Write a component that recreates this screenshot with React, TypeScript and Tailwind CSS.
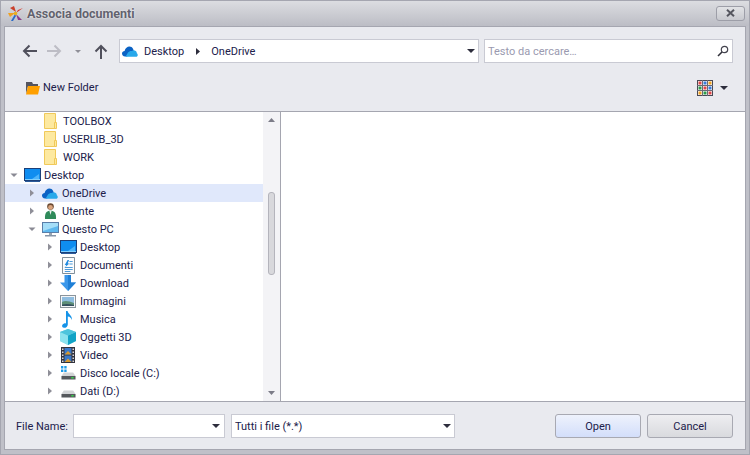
import React from "react";

const Arrow = ({ open }: { open?: boolean }) =>
  open ? (
    <svg width="8" height="8" viewBox="0 0 8 8" className="block"><path d="M0.5 2.5H7.5L4 6z" fill="#8a8a94" /></svg>
  ) : (
    <svg width="8" height="8" viewBox="0 0 8 8" className="block"><path d="M2 0.5V7.5L6 4z" fill="#8f8f98" /></svg>
  );

const Caret = () => (
  <svg width="8" height="4" viewBox="0 0 8 4" className="block"><path d="M0 0H8L4 4z" fill="#2d2d3c" /></svg>
);

const Folder = () => (
  <svg width="13" height="16" viewBox="0 0 13 16" className="block">
    <path d="M0.5 0.5H11.5V15.5H0.5z" fill="#fde9a0" stroke="#f0c95a" />
    <path d="M10.5 9.5H12.5V15.5H10.5z" fill="#fde9a0" stroke="#f0c95a" />
  </svg>
);

const Monitor = () => (
  <svg width="17" height="14" viewBox="0 0 17 14" className="block">
    <rect x="0.5" y="0.5" width="16" height="12" fill="#0f8df0" stroke="#1c3f78" />
    <path d="M1 11H16V12H1z" fill="#7fd0ff" />
    <path d="M8 11L15 6V11z" fill="#4db4fa" />
    <rect x="1" y="13" width="15" height="1" fill="#2a5a9a" />
  </svg>
);

const Cloud = () => (
  <svg width="16" height="11" viewBox="0 0 16 11" className="block">
    <path d="M3 10.5C1 10.5 0 9 0 7.6C0 6 1.3 5 2.6 5C3.2 2.2 5.4 0.5 7.4 0.5C9 0.5 10.3 1.3 11 2.8C11.5 4 11.8 5 11.8 5.4L5 10.5z" fill="#0b62c4" />
    <path d="M3.5 10.8L6 6.6C7 5.2 8.6 4.7 10 5C11 3.6 15 4.4 14.8 7.2C16 7.6 16.4 10.8 13.8 10.8z" fill="#28a8ea" />
  </svg>
);

const User = () => (
  <svg width="13" height="16" viewBox="0 0 13 16" className="block ml-[2px]">
    <circle cx="6.5" cy="3.6" r="3.3" fill="#6b4a32" />
    <circle cx="6.5" cy="4.4" r="2.4" fill="#d9a47e" />
    <path d="M1 16C0.6 10 2.6 7.8 6.5 7.8C10.4 7.8 12.4 10 12 16z" fill="#2f8a5a" />
    <path d="M5.4 8L6.5 12L7.6 8z" fill="#f0f0f0" />
  </svg>
);

const PC = () => (
  <svg width="17" height="15" viewBox="0 0 17 15" className="block">
    <rect x="0.5" y="0.5" width="16" height="10" fill="#5fb8ee" stroke="#5a7ea8" />
    <path d="M1 1H16V4L1 9z" fill="#a5def8" />
    <rect x="7" y="11" width="3" height="2" fill="#9aa4b0" />
    <rect x="3" y="13" width="11" height="1.5" fill="#8796a8" />
  </svg>
);

const Doc = () => (
  <svg width="13" height="17" viewBox="0 0 14 17" preserveAspectRatio="none" className="block ml-[2px]">
    <path d="M0.5 0.5H13.5V16.5H0.5z" fill="#fbfcfd" stroke="#7c8a96" />
    <path d="M6 3L3 8H4.6L3.6 10L8 6.5H6.2L7.6 3z" fill="#1f8ae0" />
    <path d="M8 4H11.5V5H8zM8 6.5H11.5V7.5H8zM3 10H11.5V11H3zM3 12H11.5V13H3zM3 14H9V15H3z" fill="#4d9ad8" />
  </svg>
);

const Down = () => (
  <svg width="16" height="16" viewBox="0 0 16 16" className="block">
    <path d="M4.5 0H11V7.5H16L8 16L0 7.5H4.5z" fill="#3a97ea" />
    <path d="M8 0H11V7.5H16L8 16z" fill="#1f7fd6" />
  </svg>
);

const Pic = () => (
  <svg width="16" height="13" viewBox="0 0 16 13" className="block">
    <rect x="0.5" y="0.5" width="15" height="12" fill="#f4f6f8" stroke="#8a949c" />
    <rect x="2" y="2" width="12" height="9" fill="#8fbde0" />
    <path d="M2 7C5 5 9 6 14 8V11H2z" fill="#5d8f78" />
    <path d="M2 9.5C6 8.5 10 9 14 10V11H2z" fill="#35505e" />
  </svg>
);

const Note = () => (
  <svg width="11" height="17" viewBox="0 0 11 17" className="block ml-[2px]">
    <path d="M4 0H5.6C6 3 10.4 4.4 10 9C9.4 7 8 5.6 5.8 5.4V13.4C5.8 15.4 3.8 17 1.9 16.8C0.4 16.6 -0.4 15.2 0.5 13.8C1.4 12.4 3 12 4 12.4z" fill="#1593e8" />
  </svg>
);

const Cube = () => (
  <svg width="16" height="16" viewBox="0 0 16 16" className="block">
    <path d="M8 0L16 3V12L8 16L0 12V3z" fill="#6fd3e6" />
    <path d="M0 3L8 6.4V16L0 12z" fill="#8be2ee" />
    <path d="M8 6.4L16 3V12L8 16z" fill="#11a3c6" />
    <path d="M8 0L16 3L8 6.4L0 3z" fill="#4cc4dc" />
  </svg>
);

const Film = () => (
  <svg width="14" height="16" viewBox="0 0 14 16" className="block ml-[1px]">
    <rect width="14" height="16" fill="#33333c" />
    <path d="M1 1.5H2.5V3H1zM1 4.5H2.5V6H1zM1 7.5H2.5V9H1zM1 10.5H2.5V12H1zM1 13.5H2.5V15H1zM11.5 1.5H13V3H11.5zM11.5 4.5H13V6H11.5zM11.5 7.5H13V9H11.5zM11.5 10.5H13V12H11.5zM11.5 13.5H13V15H11.5z" fill="#d8d8de" />
    <rect x="3.5" y="1" width="7" height="6.5" fill="#3a78c8" />
    <rect x="3.5" y="8.5" width="7" height="6.5" fill="#3a78c8" />
    <path d="M3.5 7.5L7 4L10.5 7.5zM3.5 15L7 11.5L10.5 15z" fill="#d89a30" />
  </svg>
);

const Drive = ({ win }: { win?: boolean }) => (
  <svg width="15" height="14" viewBox="0 0 16 14" preserveAspectRatio="none" className="block ml-[1px]">
    {win && <path d="M0 0H2.5V2.5H0zM3.5 0H6V2.5H3.5zM0 3.5H2.5V6H0zM3.5 3.5H6V6H3.5z" fill="#1d9be8" />}
    <path d="M3 6.5H13L15.5 10H0.5z" fill="#d2d4d6" />
    <rect x="0.5" y="10" width="15" height="3.5" fill="#55585c" />
    <rect x="11" y="11" width="2.5" height="1.5" fill="#35d04a" />
  </svg>
);

type Row = { label: string; indent: number; arrow?: "open" | "closed"; icon: React.ReactNode; selected?: boolean };

const rows: Row[] = [
  { label: "TOOLBOX", indent: 39, icon: <Folder /> },
  { label: "USERLIB_3D", indent: 39, icon: <Folder /> },
  { label: "WORK", indent: 39, icon: <Folder /> },
  { label: "Desktop", indent: 5, arrow: "open", icon: <Monitor /> },
  { label: "OneDrive", indent: 23, arrow: "closed", icon: <Cloud />, selected: true },
  { label: "Utente", indent: 23, arrow: "closed", icon: <User /> },
  { label: "Questo PC", indent: 23, arrow: "open", icon: <PC /> },
  { label: "Desktop", indent: 41, arrow: "closed", icon: <Monitor /> },
  { label: "Documenti", indent: 41, arrow: "closed", icon: <Doc /> },
  { label: "Download", indent: 41, arrow: "closed", icon: <Down /> },
  { label: "Immagini", indent: 41, arrow: "closed", icon: <Pic /> },
  { label: "Musica", indent: 41, arrow: "closed", icon: <Note /> },
  { label: "Oggetti 3D", indent: 41, arrow: "closed", icon: <Cube /> },
  { label: "Video", indent: 41, arrow: "closed", icon: <Film /> },
  { label: "Disco locale (C:)", indent: 41, arrow: "closed", icon: <Drive win /> },
  { label: "Dati (D:)", indent: 41, arrow: "closed", icon: <Drive /> },
];

export default function App() {
  return (
    <div className="w-[750px] h-[455px] flex flex-col overflow-hidden bg-[#bfc0c8] border border-[#a5a6b0] text-[11px] text-[#20204a] font-['Roboto','Liberation_Sans',sans-serif]">
      {/* Title bar */}
      <div className="h-[25px] shrink-0 flex items-center pl-[6px] pr-[4px] bg-gradient-to-b from-[#dcdde1] to-[#bcbdc5]">
        <svg width="17" height="17" viewBox="0 0 17 17" className="block">
          <path d="M7 1L9 7L3 3z" fill="#c9402c" />
          <path d="M16 3L9 8L11 5z" fill="#d93a2a" />
          <path d="M1 8L8 8L3 12z" fill="#f0a020" />
          <path d="M8 9L4 16L6 16L9 11z" fill="#2a6ac8" />
          <path d="M9 9L15 15L11 15z" fill="#8a3a8a" />
          <circle cx="8.5" cy="8.5" r="1.8" fill="#e8b020" />
        </svg>
        <span className="ml-[3px] pt-[2px] font-bold text-[#62626e] text-[12.5px] leading-none [text-shadow:0_0_2px_#ffffff]">Associa documenti</span>
        <div className="ml-auto w-[29px] h-[15px] mb-[1px] rounded-[3px] border border-[#9d9ea8] bg-gradient-to-b from-[#e2e3e6] to-[#c8c9cf] flex items-center justify-center">
          <svg width="9" height="8" viewBox="0 0 9 8" className="block"><path d="M1 0.8L8 7.2M8 0.8L1 7.2" stroke="#55565f" strokeWidth="2" /></svg>
        </div>
      </div>

      {/* Client area */}
      <div className="flex-1 min-h-0 mx-[3px] mb-[4px] border border-[#a5a6b0] bg-[#e9eaef] flex flex-col">
        {/* Toolbar */}
        <div className="h-[85px] shrink-0 flex flex-col border-b border-[#a5a6b0]">
          <div className="flex items-center mt-[12px] h-[24px]">
            <svg width="16" height="14" viewBox="0 0 16 14" className="block ml-[17px]"><path d="M15 7H2M7.5 1.5L2 7L7.5 12.5" fill="none" stroke="#50505c" strokeWidth="2" /></svg>
            <svg width="16" height="14" viewBox="0 0 16 14" className="block ml-[8px]"><path d="M1 7H14M8.5 1.5L14 7L8.5 12.5" fill="none" stroke="#bdbdc5" strokeWidth="2" /></svg>
            <svg width="6" height="3" viewBox="0 0 6 3" className="block ml-[13px]"><path d="M0 0H6L3 3z" fill="#8f8f98" /></svg>
            <svg width="14" height="15" viewBox="0 0 14 15" className="block ml-[13px]"><path d="M7 15V2M1.5 7.5L7 2L12.5 7.5" fill="none" stroke="#50505c" strokeWidth="2" /></svg>
            <div className="ml-[11px] w-[360px] h-[24px] bg-white border border-[#c9cad3] flex items-center pl-[2px] pr-[3px]">
              <Cloud />
              <span className="ml-[6px] pt-[2px]">Desktop</span>
              <svg width="4" height="7" viewBox="0 0 4 7" className="block ml-[12px]"><path d="M0 0V7L4 3.5z" fill="#2d2d3c" /></svg>
              <span className="ml-[11px] pt-[2px]">OneDrive</span>
              <div className="ml-auto"><Caret /></div>
            </div>
            <div className="ml-[5px] w-[249px] h-[24px] bg-white border border-[#c9cad3] flex items-center pl-[3px] pr-[3px]">
              <span className="text-[#9a9ab0] pt-[2px]">Testo da cercare…</span>
              <svg width="12" height="12" viewBox="0 0 12 12" className="block ml-auto"><circle cx="7.5" cy="4.5" r="3.2" fill="none" stroke="#44444f" strokeWidth="1.2" /><path d="M5 7L1 11" stroke="#30303a" strokeWidth="1.6" /></svg>
            </div>
          </div>
          <div className="flex items-center mt-[15px] h-[20px]">
            <svg width="14" height="13" viewBox="0 0 14 13" className="block ml-[21px]">
              <path d="M0 0H6L7 2H12V4H2L0 12z" fill="#55555f" />
              <path d="M2 4H14L12 12.5H0z" fill="#ffa000" />
            </svg>
            <span className="ml-[3px]">New Folder</span>
            <svg width="16" height="16" viewBox="0 0 16 16" className="block ml-auto">
              <rect x="0.5" y="0.5" width="15" height="15" fill="#fff" stroke="#4a4a55" />
              <path d="M5.5 0V16M10.5 0V16M0 5.5H16M0 10.5H16" stroke="#6a6a75" />
              <path d="M1.5 1.5H4.5V4.5H1.5z" fill="#e04848" /><path d="M6.5 1.5H9.5V4.5H6.5z" fill="#3a7ad8" /><path d="M11.5 1.5H14.5V4.5H11.5z" fill="#f0a020" />
              <path d="M1.5 6.5H4.5V9.5H1.5z" fill="#2f9a4a" /><path d="M6.5 6.5H9.5V9.5H6.5z" fill="#e04848" /><path d="M11.5 6.5H14.5V9.5H11.5z" fill="#3a7ad8" />
              <path d="M1.5 11.5H4.5V14.5H1.5z" fill="#f0a020" /><path d="M6.5 11.5H9.5V14.5H6.5z" fill="#2f9a4a" /><path d="M11.5 11.5H14.5V14.5H11.5z" fill="#e04848" />
            </svg>
            <div className="ml-[7px] mr-[17px]"><Caret /></div>
          </div>
        </div>

        {/* Panes */}
        <div className="h-[290px] shrink-0 flex bg-white border-b border-[#a5a6b0]">
          <div className="w-[258px] shrink-0 overflow-hidden">
            {rows.map((r, i) => (
              <div key={i} className={`h-[18px] flex items-center ${r.selected ? "bg-[#e0e8fb]" : ""}`} style={{ paddingLeft: r.indent }}>
                {r.arrow && (
                  <div className="w-[14px] shrink-0">
                    <Arrow open={r.arrow === "open"} />
                  </div>
                )}
                <div className={`${r.arrow ? "w-[20px]" : "w-[19px]"} h-[18px] shrink-0 flex items-center`}>{r.icon}</div>
                <span className="whitespace-nowrap pt-[2px]">{r.label}</span>
              </div>
            ))}
          </div>
          <div className="w-[17px] shrink-0 bg-[#f3f3f6] flex flex-col items-center pt-[6px] pb-[6px]">
            <svg width="7" height="4" viewBox="0 0 7 4" className="block"><path d="M0 4H7L3.5 0z" fill="#7c7c88" /></svg>
            <div className="w-[7px] h-[83px] mt-[70px] rounded-[3px] bg-[#d8d8dc] border border-[#b4b4bc]" />
            <svg width="7" height="4" viewBox="0 0 7 4" className="block mt-auto"><path d="M0 0H7L3.5 4z" fill="#7c7c88" /></svg>
          </div>
          <div className="flex-1 border-l border-[#a5a6b0]" />
        </div>

        {/* Footer */}
        <div className="flex-1 flex items-center pl-[11px] pr-[12px]">
          <span className="w-[57px] shrink-0 pt-[4px]">File Name:</span>
          <div className="w-[152px] h-[24px] bg-white border border-[#c9cad3] flex items-center justify-end pr-[4px]"><Caret /></div>
          <div className="ml-[6px] w-[224px] h-[24px] bg-white border border-[#c9cad3] flex items-center pl-[3px] pr-[3px]">
            <span className="pt-[4px]">Tutti i file (*.*)</span>
            <div className="ml-auto"><Caret /></div>
          </div>
          <button className="ml-auto w-[86px] h-[24px] pt-[3px] rounded-[3px] border border-[#a8a9b2] bg-gradient-to-b from-[#eef2fc] to-[#d3defa] flex items-center justify-center">Open</button>
          <button className="ml-[6px] w-[86px] h-[24px] pt-[3px] rounded-[3px] border border-[#a8a9b2] bg-gradient-to-b from-[#eeeef1] to-[#d9dade] flex items-center justify-center">Cancel</button>
        </div>
      </div>
    </div>
  );
}
